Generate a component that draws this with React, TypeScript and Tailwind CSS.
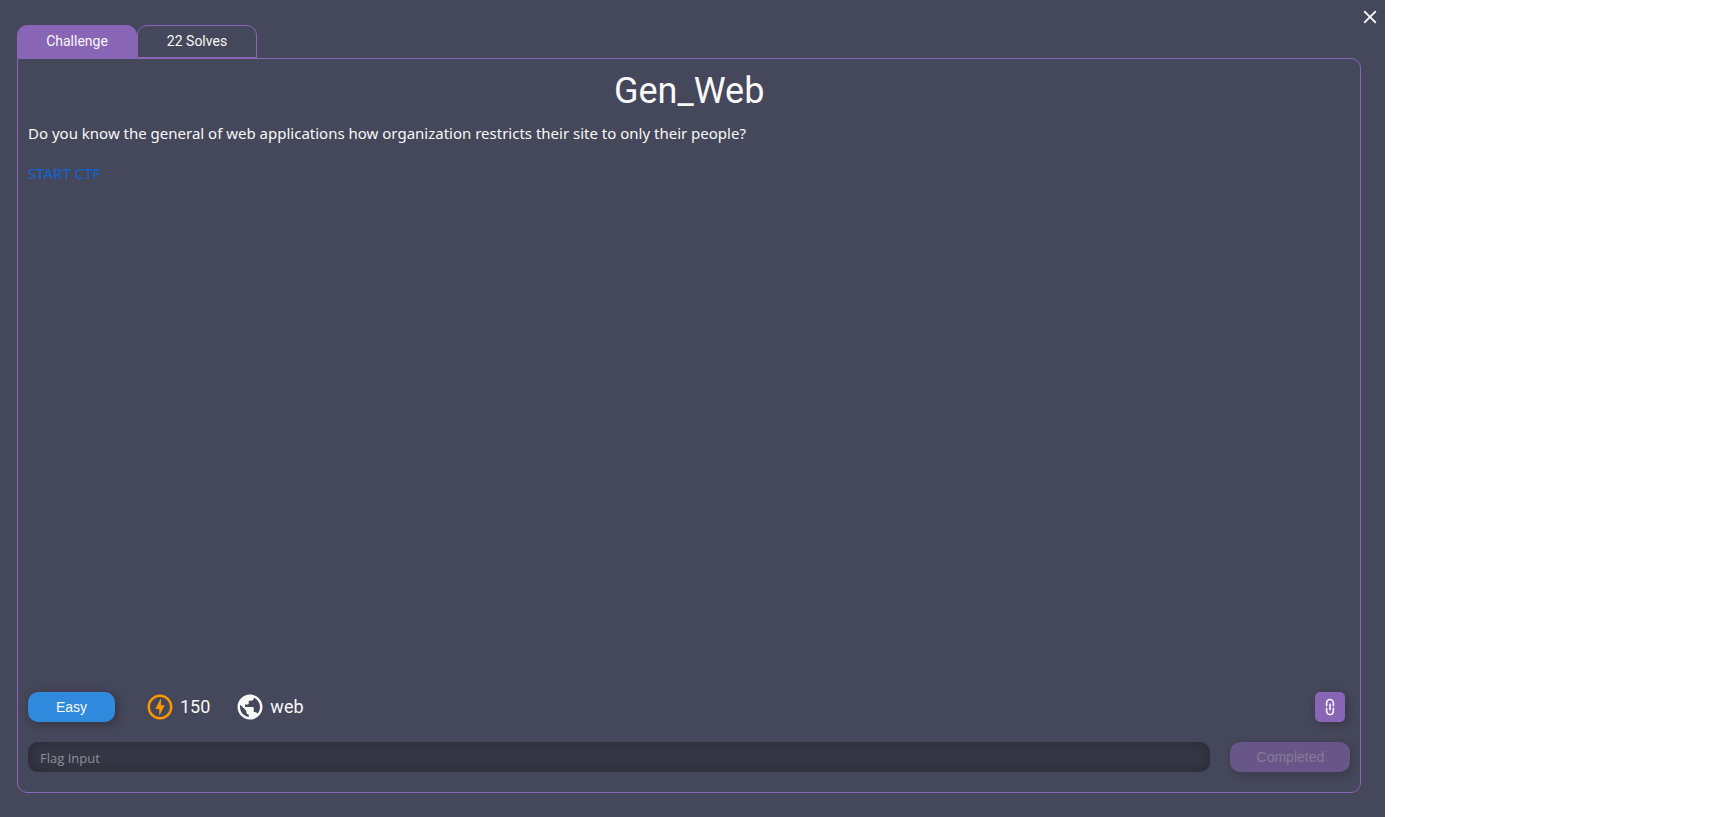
import { useState } from "react";
import { MdClose, MdLink, MdOutlineOfflineBolt, MdPublic } from "react-icons/md";

const tabClass =
  "h-full w-[120px] rounded-t-[10px] border border-[#8965b5] pb-0.5 text-sm text-[#f8f8f8]";

export default function App() {
  const [flag, setFlag] = useState("");
  return (
    <div className="min-h-screen bg-white font-['Roboto',sans-serif] text-[#f8f8f8]">
      <main className="relative flex min-h-screen w-[80.5%] flex-col bg-[#45475a] pt-[25px] pr-6 pb-6 pl-[17px]">
        <button type="button" aria-label="Close" className="absolute top-1.5 right-1">
          <MdClose size={22} />
        </button>

        <div role="tablist" className="flex h-[33px]">
          <button type="button" role="tab" aria-selected="true" className={`${tabClass} bg-[#8965b5]`}>
            Challenge
          </button>
          <button type="button" role="tab" aria-selected="false" className={tabClass}>
            22 Solves
          </button>
        </div>

        <section className="flex flex-1 flex-col rounded-[10px] rounded-tl-none border border-[#8965b5] px-2.5 pt-2.5 pb-5">
          <h1 className="text-center text-4xl leading-[44px]">Gen_Web</h1>
          <div className="mt-2 flex-1 font-['Noto_Sans','Open_Sans',sans-serif] text-[15px] leading-6">
            <p className="mb-4">
              Do you know the general of web applications how organization restricts their site to only their people?
            </p>
            <a href="#start" className="text-[#0d66d8]">
              START CTF
            </a>
          </div>

          <div className="flex items-center">
            <span className="flex h-[30px] w-[87px] items-center justify-center rounded-[10px] bg-[#2f89dc] font-['Liberation_Sans',Arial,sans-serif] text-sm shadow-[2px_2px_10px_rgba(0,0,0,0.3)]">
              Easy
            </span>
            <span className="ml-[30px] flex items-center gap-[5px] text-lg">
              <MdOutlineOfflineBolt size={30} className="text-[#ff9800]" />
              150
            </span>
            <span className="ml-[25px] flex items-center gap-[5px] text-lg">
              <MdPublic size={30} />
              web
            </span>
            <button
              type="button"
              aria-label="Copy link"
              className="mr-[5px] ml-auto flex h-[30px] w-[30px] items-center justify-center rounded-[5px] bg-[#8965b5] shadow-[2px_2px_8px_rgba(0,0,0,0.25)]"
            >
              <MdLink size={20} className="rotate-90" />
            </button>
          </div>

          <form className="mt-5 flex gap-5" onSubmit={(e) => e.preventDefault()}>
            <input
              aria-label="Flag Input"
              placeholder="Flag Input"
              value={flag}
              onChange={(e) => setFlag(e.target.value)}
              className="h-[30px] min-w-0 flex-1 rounded-[10px] bg-[#353746] px-3 pt-0.5 font-['Open_Sans','Noto_Sans',sans-serif] text-[13px] shadow-[inset_0_0_15px_rgba(0,0,0,0.25)] placeholder:text-[#8f9096]"
            />
            <button
              type="submit"
              disabled
              className="h-[30px] w-[120px] rounded-[10px] bg-[#685688] font-['Liberation_Sans',Arial,sans-serif] text-sm text-[#877b99] shadow-[2px_2px_10px_rgba(0,0,0,0.2)]"
            >
              Completed
            </button>
          </form>
        </section>
      </main>
    </div>
  );
}
